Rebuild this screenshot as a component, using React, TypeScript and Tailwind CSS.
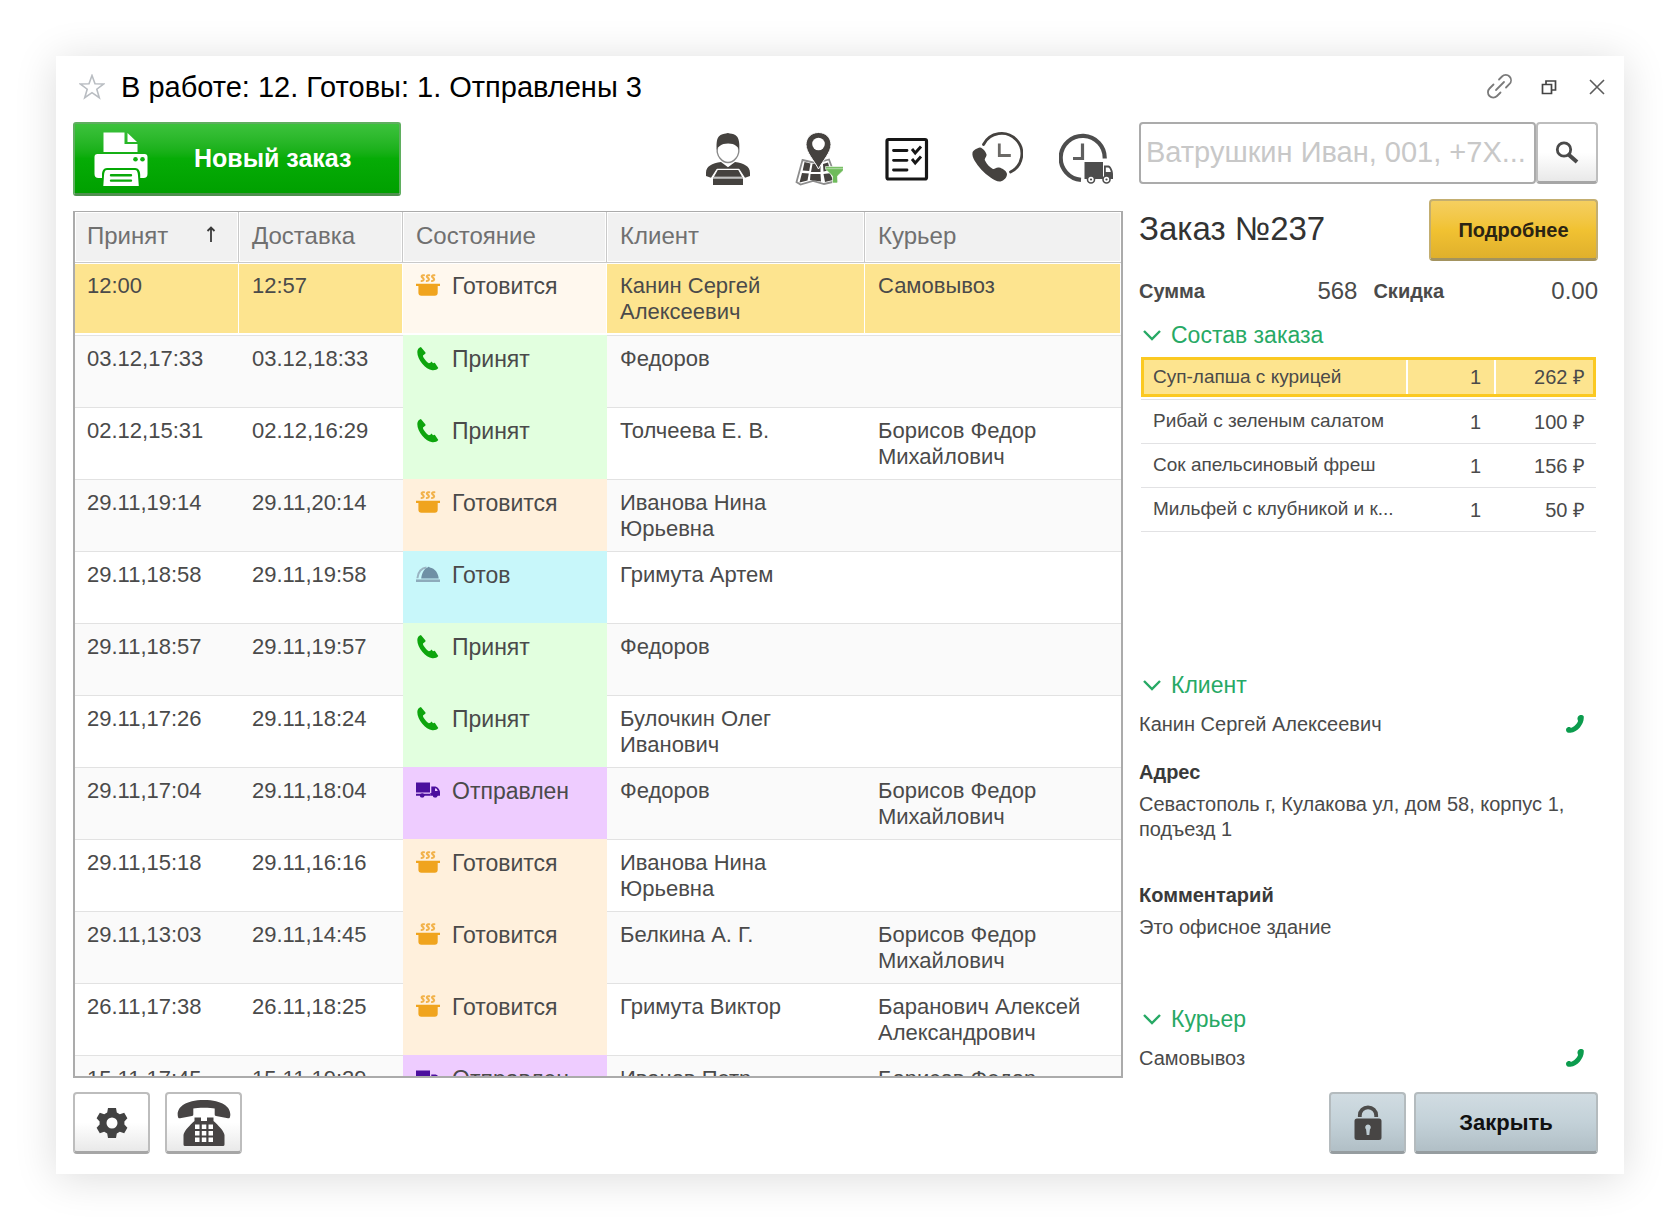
import type { ReactNode } from "react";

type Status = "cooking" | "accepted" | "ready" | "sent";

type Order = {
  accepted: string;
  delivery: string;
  status: Status;
  client: string;
  courier: string;
};

const orders: Order[] = [
  { accepted: "12:00", delivery: "12:57", status: "cooking", client: "Канин Сергей Алексеевич", courier: "Самовывоз" },
  { accepted: "03.12,17:33", delivery: "03.12,18:33", status: "accepted", client: "Федоров", courier: "" },
  { accepted: "02.12,15:31", delivery: "02.12,16:29", status: "accepted", client: "Толчеева Е. В.", courier: "Борисов Федор Михайлович" },
  { accepted: "29.11,19:14", delivery: "29.11,20:14", status: "cooking", client: "Иванова Нина Юрьевна", courier: "" },
  { accepted: "29.11,18:58", delivery: "29.11,19:58", status: "ready", client: "Гримута Артем", courier: "" },
  { accepted: "29.11,18:57", delivery: "29.11,19:57", status: "accepted", client: "Федоров", courier: "" },
  { accepted: "29.11,17:26", delivery: "29.11,18:24", status: "accepted", client: "Булочкин Олег Иванович", courier: "" },
  { accepted: "29.11,17:04", delivery: "29.11,18:04", status: "sent", client: "Федоров", courier: "Борисов Федор Михайлович" },
  { accepted: "29.11,15:18", delivery: "29.11,16:16", status: "cooking", client: "Иванова Нина Юрьевна", courier: "" },
  { accepted: "29.11,13:03", delivery: "29.11,14:45", status: "cooking", client: "Белкина А. Г.", courier: "Борисов Федор Михайлович" },
  { accepted: "26.11,17:38", delivery: "26.11,18:25", status: "cooking", client: "Гримута Виктор", courier: "Баранович Алексей Александрович" },
  { accepted: "15.11,17:45", delivery: "15.11,19:29", status: "sent", client: "Иванов Петр", courier: "Борисов Федор Михайлович" },
];

const dishes = [
  { name: "Суп-лапша с курицей", qty: 1, price: "262 ₽" },
  { name: "Рибай с зеленым салатом", qty: 1, price: "100 ₽" },
  { name: "Сок апельсиновый фреш", qty: 1, price: "156 ₽" },
  { name: "Мильфей с клубникой и к...", qty: 1, price: "50 ₽" },
];

const PotIcon = () => (
  <svg viewBox="0 0 24 24" className="size-6 shrink-0" fill="none" aria-hidden="true">
    <g stroke="#f2b24a" strokeWidth="2" strokeLinecap="round">
      <path d="M8 1.300C6 .700 4.800 2.300 6.500 3.600S8.400 6.700 5.600 7.100" />
      <path d="M13.200 1.300C11.200.700 10 2.300 11.700 3.600S13.600 6.700 10.800 7.100" />
      <path d="M18.400 1.300C16.400.700 15.200 2.300 16.900 3.600S18.800 6.700 16 7.100" />
    </g>
    <path d="M0 9.700h24v2.300h-2.300v6.700a3 3 0 0 1-3 3H5.400a3 3 0 0 1-3-3V12H0z" fill="#f0a41e" />
  </svg>
);

const ReceiverIcon = () => (
  <svg viewBox="0 0 24 24" className="size-6 shrink-0" aria-hidden="true">
    <path
      d="M4.900 0 9.300 5.200c.4.500.3 1.100-.1 1.500L7 8.500c-.5 1.200 2.800 5.800 5.900 7.800l1.500-.6 1.100-1.200 1.500 1.800 1.800-.6 3.500 5.400c-1.200 1.700-3.800 2.500-6 2.200C9.700 22.500 1.200 12.500 1.300 5 1.400 2.700 2.600.600 4.900 0z"
      fill="#0da50d"
    />
  </svg>
);

const ClocheIcon = () => (
  <svg viewBox="0 0 24 24" className="size-6 shrink-0" aria-hidden="true">
    <path d="M0 16.400h24v2.600H0z" fill="#8eabbb" />
    <path d="M1.400 15.200C1.800 8.500 6 4.900 10.500 4.500" stroke="#9ab4c2" strokeWidth="2" fill="none" />
    <path d="M5.200 15.600C6 9.500 8.600 5.600 11.600 4.600c.3-1.200 1.800-1.200 2.100 0 5.300.9 8.600 5.600 9 11z" fill="#6f90a5" />
  </svg>
);

const VanIcon = () => (
  <svg viewBox="0 0 24 24" className="size-6 shrink-0" fill="#4b0f9e" aria-hidden="true">
    <path d="M0 3.500h14v10H0z" />
    <path d="M0 14.800h14.300v2H8.500a2.500 2.500 0 0 1-4.600 0H0z" />
    <path d="M15.300 7.500h4.200c2.400.5 4 3.200 4.500 5.200v4.100h-2.300a2.800 2.800 0 0 1-5 0h-2.400v-2.700h1zM19 9.300v2.600h2.800l-1.200-2.200z" fillRule="evenodd" />
    <circle cx="6.200" cy="16.400" r="2.200" />
    <circle cx="19.200" cy="16.400" r="2.200" />
  </svg>
);

const statuses: Record<Status, { label: string; tone: string; icon: ReactNode }> = {
  cooking: { label: "Готовится", tone: "bg-[#fff0dc]", icon: <PotIcon /> },
  accepted: { label: "Принят", tone: "bg-[#e2ffdf]", icon: <ReceiverIcon /> },
  ready: { label: "Готов", tone: "bg-[#c8f7fa]", icon: <ClocheIcon /> },
  sent: { label: "Отправлен", tone: "bg-[#eeccff]", icon: <VanIcon /> },
};

const PrinterIcon = () => (
  <svg viewBox="0 0 54 54" className="size-[54px] shrink-0" aria-hidden="true">
    <path d="M9.500 0.500h21v11.500h13v8H9.500z" fill="#fff" />
    <path d="M33.500 1 43 10H33.500z" fill="#fff" />
    <path d="M3.500 22h47a3 3 0 0 1 3 3v17a4 4 0 0 1-4 4h-3.300v-3c0-4-1.700-7-5-7H13c-3.500 0-5 3-5 7v3H4.500a4 4 0 0 1-4-4V25a3 3 0 0 1 3-3z" fill="#fff" />
    <circle cx="41.500" cy="27.300" r="2.300" fill="#12b112" />
    <circle cx="48.500" cy="27.300" r="2.300" fill="#12b112" />
    <path d="M13 38h28c2 0 2.800 2 3 5.500l.8 10.500H9.300L10 43.500C10.200 40 11 38 13 38z" fill="#fff" />
    <path d="M17 43.200h20M17 48.600h20" stroke="#0aa90a" strokeWidth="2.400" strokeLinecap="round" />
  </svg>
);

const CourierIcon = () => (
  <svg viewBox="0 0 54 54" className="size-[54px]" aria-hidden="true">
    <path d="M18.500 16c-1.800 8 5 14.500 10.500 14.500S41.300 24 39.500 16" fill="#fff" stroke="#8a8a8a" strokeWidth="1.400" />
    <path d="M17.800 18c-.6-4-.4-11 2-13.500C22 2 25 2 27 1.500c.8-.8 3-.8 3.800 0 2.500.4 5.600.8 7.400 3.200 2.200 2.800 2.500 9.300 1.900 13.300-.8-3-4-6.500-11-6.500s-10.500 3.500-11.300 6.500z" fill="#45423f" />
    <path d="m22 30 7 5.200 7-5.200c9 1.500 15 4 15 11v3l-5 1.700-5.500-8.500h-23L12 45.700 7 44v-3c0-7 6-9.500 15-11z" fill="#45423f" />
    <path d="M18.500 37.300h21l4.500 8H14z" fill="#45423f" stroke="#fff" strokeWidth="1.200" />
    <path d="M14 46.500h30V53H14z" fill="#45423f" />
    <path d="M14 46h30" stroke="#a5a5a5" strokeWidth="1.400" />
  </svg>
);

const MapIcon = () => (
  <svg viewBox="0 0 54 54" className="size-[54px]" aria-hidden="true">
    <path d="m13.500 28 13 3 13.500-3.500 8 21.500-13 3-11-3-12.500 3.500-4-2.500z" fill="#fff" stroke="#8d8d8d" strokeWidth="1.800" />
    <path d="m15.500 30 6 1.500-1.300 7.500-6.500-.5zM23.500 32h8v8h-9.500zM34 32l5-1.500 2 7.500-6.500 1.500zM13 41l6.800.5-1.300 7-8 2zM21.500 42h10l.5 7.500-11-1.500zM34.500 42l6.500-.7 3 6.700-8 2z" fill="#45423f" />
    <path d="M29.500 0.500C37 .500 42 6 42 12.500c0 8-8.500 16.500-12.500 24.500C25.500 29 17 20.500 17 12.500 17 6 22 .500 29.500.500z" fill="#45423f" stroke="#fff" strokeWidth="1" />
    <circle cx="29.500" cy="12" r="6.300" fill="#fff" />
    <path d="M36.500 34.500h19v2.700L48.500 44v7h-5v-7l-7-6.800z" fill="#6fbb5b" stroke="#fff" strokeWidth=".6" />
    <path d="M37 36.500h18" stroke="#a7d69b" strokeWidth="1.400" />
  </svg>
);

const ChecklistIcon = () => (
  <svg viewBox="0 0 54 54" className="size-[54px]" fill="none" stroke="#161616" aria-hidden="true">
    <rect x="8" y="7.500" width="39.500" height="39.500" rx="1.500" strokeWidth="3.200" />
    <path d="M14.500 18.500H28M14.500 28.300H28M14.500 38H28" strokeWidth="2.800" strokeLinecap="round" />
    <path d="m33 17 3.200 4 5.800-6.500M33 27l3.200 4 5.800-6.500" strokeWidth="2.900" />
  </svg>
);

const CallTimeIcon = () => (
  <svg viewBox="0 0 54 54" className="size-[54px]" aria-hidden="true">
    <path d="M14.500 12.500A20.300 20.300 0 1 1 41.500 40" fill="none" stroke="#45423f" strokeWidth="2.800" strokeLinecap="round" />
    <path d="M30.300 11.500V23.500h11.500" fill="none" stroke="#6b6966" strokeWidth="2.800" />
    <path d="M3.500 20.500c1-2.500 4.500-4.500 7.500-5 3 .7 5.500 3.800 6.500 6.800.5 2.700-2.500 4.200-1.500 6.200 2 3.800 4.500 6.500 7.500 8.300 2.300 1 3.500-2 6.500-1.300 3.500.7 7.500 3.500 8 6.500 0 3.500-3 6.500-6.500 7.500-3 .5-7-2-10-4-7-4.800-12.500-11-16-17-1.500-2.700-2.500-5.500-2-8z" fill="#45423f" />
  </svg>
);

const DeliveryTimeIcon = () => (
  <svg viewBox="0 0 54 54" className="size-[54px]" aria-hidden="true">
    <path d="M22 47.800A22 22 0 1 1 45.700 26.500" fill="none" stroke="#4d4d4d" strokeWidth="4.200" />
    <path d="M23.500 11.500v15H14" fill="none" stroke="#5f5f5f" strokeWidth="3.200" />
    <path d="M25.500 30h18.500v17H25.500z" fill="#4d4d4d" />
    <path d="M45 33.500h4.500c2.500.5 4.500 5 4.500 8.500v5h-9zM46.800 35.500V40h5c-.5-2.500-1.500-4.500-3-4.500z" fill="#4d4d4d" fillRule="evenodd" />
    <circle cx="32" cy="47.500" r="3.500" fill="#fff" stroke="#4d4d4d" strokeWidth="1.600" />
    <circle cx="47.500" cy="47.500" r="3.500" fill="#fff" stroke="#4d4d4d" strokeWidth="1.600" />
    <circle cx="32" cy="47.500" r="1.100" fill="#4d4d4d" />
    <circle cx="47.500" cy="47.500" r="1.100" fill="#4d4d4d" />
  </svg>
);

const tools = [
  { label: "Курьеры", icon: <CourierIcon /> },
  { label: "Карта", icon: <MapIcon /> },
  { label: "Список", icon: <ChecklistIcon /> },
  { label: "Звонки", icon: <CallTimeIcon /> },
  { label: "Доставка", icon: <DeliveryTimeIcon /> },
];

const columns = ["Принят", "Доставка", "Состояние", "Клиент", "Курьер"];

const CallButton = ({ label }: { label: string }) => (
  <button aria-label={label} className="mr-[14px]">
    <svg viewBox="0 0 18 18" className="size-[18px]" aria-hidden="true">
      <path
        d="M13.300.4c1.200-.7 3.700-.5 4.400.9.9 6.700-5.300 15.400-13.300 16.500-1.900.3-3.700-.4-4.200-1.900-.4-1.400 0-2.900 1.200-3.400 1-.5 2.100-.5 3-.1.900.4 1.300.4 2-.1C8.700 11 10.900 8.700 11.900 6.400c.2-.7 0-1-.3-1.800-.5-1.500.3-3.500 1.700-4.200z"
        fill="#0c9c4e"
      />
    </svg>
  </button>
);

const SectionTitle = ({ children }: { children: ReactNode }) => (
  <h3>
    <button className="flex h-7 items-center gap-[10px] pl-1 text-[23px] leading-7 text-[#27a965]">
      <svg viewBox="0 0 18 12" className="h-3 w-[18px]" fill="none" stroke="currentColor" strokeWidth="2.400" aria-hidden="true">
        <path d="m1 2 8 8 8-8" />
      </svg>
      {children}
    </button>
  </h3>
);

const lightButton =
  "flex items-center justify-center rounded-[4px] border-2 border-b-[3px] border-[#bdbdbd] border-b-[#a6a6a6] bg-linear-to-b from-white from-50% to-[#e9e9e9]";
const blueButton =
  "flex items-center justify-center rounded-[4px] border-2 border-b-[3px] border-[#b4bbbe] border-b-[#969da0] bg-linear-to-b from-[#d1dce2] via-[#c3d1d8] to-[#b1bfc6]";

export default function App() {
  return (
    <div className="flex h-screen bg-white p-14 font-['Liberation_Sans',Arial,sans-serif] text-[#4a4a4a]">
      <main className="flex min-w-0 flex-1 flex-col bg-white pb-5 shadow-[0_4px_40px_rgba(0,0,0,0.14)]">
        <header className="mb-1 flex h-[62px] shrink-0 items-center pr-[19px] pl-[23px]">
          <button aria-label="Избранное">
            <svg viewBox="0 0 26 26" className="size-[26px]" fill="none" stroke="#b9bdc2" strokeWidth="1.600" aria-hidden="true">
              <path d="m13 1.500 3 8.200 8.800.2-7 5.300 2.500 8.500L13 18.700l-7.300 5 2.500-8.500-7-5.300 8.800-.2z" />
            </svg>
          </button>
          <h1 className="ml-4 flex-1 text-[29px] leading-9 text-black">В работе: 12. Готовы: 1. Отправлены 3</h1>
          <div className="flex items-center text-[#5c5c5c]">
            <button aria-label="Ссылка">
              <svg viewBox="0 0 26 26" className="size-[26px]" fill="none" stroke="#7a7a7a" strokeWidth="1.800" strokeLinecap="round" aria-hidden="true">
                <path d="m9 16 8-8" />
                <path d="m12 5.500 3-3a5.300 5.300 0 0 1 7.500 0c2 2 2 5.300 0 7.500l-3.500 3.500" />
                <path d="m6.500 10.500-4 4a5.300 5.300 0 0 0 0 7.500 5.300 5.300 0 0 0 7.500 0l3.500-3.500" />
              </svg>
            </button>
            <button aria-label="Свернуть в окно" className="ml-7">
              <svg viewBox="0 0 16 16" className="size-4" fill="none" stroke="#444" strokeWidth="1.700" aria-hidden="true">
                <path d="M1.500 5.500h9v9h-9zM5 5V2h9.500v9H11" />
              </svg>
            </button>
            <button aria-label="Закрыть окно" className="ml-8">
              <svg viewBox="0 0 16 16" className="size-4" fill="none" stroke="#5c5c5c" strokeWidth="1.600" aria-hidden="true">
                <path d="m1 1 14 14M15 1 1 15" />
              </svg>
            </button>
          </div>
        </header>

        <div className="grid min-h-0 flex-1 grid-cols-[1050fr_459fr] gap-4 pr-[26px] pl-[17px]">
          <section className="flex min-h-0 flex-col">
            <div className="flex h-[74px] shrink-0 items-center justify-between">
              <button className="flex h-full w-[328px] items-center rounded-[3px] border-2 border-b-[3px] border-[#5fae5f] border-b-[#4f8f4f] bg-linear-to-b from-[#3cc23c] via-[#06ac06] to-[#00a000] pl-[19px] text-[25px] font-bold text-white">
                <PrinterIcon />
                <span className="ml-[46px]">Новый заказ</span>
              </button>
              <div className="flex gap-9 pr-[10px]">
                {tools.map((t) => (
                  <button key={t.label} aria-label={t.label}>
                    {t.icon}
                  </button>
                ))}
              </div>
            </div>

            <div className="mt-[15px] min-h-0 flex-1 overflow-hidden border-2 border-t border-[#ababab]">
              <table className="w-full table-fixed border-separate border-spacing-0">
                <colgroup>
                  <col className="w-[164px]" />
                  <col className="w-[164px]" />
                  <col className="w-[204px]" />
                  <col className="w-[258px]" />
                  <col />
                </colgroup>
                <thead>
                  <tr className="h-[51px]">
                    {columns.map((c, i) => (
                      <th
                        key={c}
                        scope="col"
                        className="border-r border-b border-[#c9c9c9] bg-[#f1f1f1] pr-3 pb-[2px] pl-[13px] text-left text-[24px] leading-7 font-normal text-[#707070] shadow-[inset_0_0_0_1px_#fff] first:pl-3 last:border-r-0"
                      >
                        <span className="flex items-center justify-between">
                          {c}
                          {i === 0 && (
                            <svg viewBox="0 0 10 16" className="mr-[10px] mb-1 h-4 w-[10px]" fill="none" stroke="#3a3a3a" strokeWidth="1.800" aria-hidden="true">
                              <path d="M5 16V1.500M1.500 5l3.500-3.500L8.500 5" />
                            </svg>
                          )}
                        </span>
                      </th>
                    ))}
                  </tr>
                </thead>
                <tbody className="text-[22px] leading-[26px]">
                  {orders.map((o, i) => {
                    const s = statuses[o.status];
                    const selected = i === 0;
                    const cell = selected
                      ? "border-t border-r border-b-2 border-white bg-[#fde48f] bg-clip-padding pt-[9px] pr-3 pl-[13px] align-top first:pl-3"
                      : i % 2
                        ? "border-t border-[#e2e2e2] bg-[#fafafa] pt-[10px] pr-3 pl-[13px] align-top first:pl-3"
                        : "border-t border-[#e2e2e2] bg-white pt-[10px] pr-3 pl-[13px] align-top first:pl-3";
                    return (
                      <tr key={i} className="h-[72px]">
                        <td className={cell}>{o.accepted}</td>
                        <td className={cell}>{o.delivery}</td>
                        <td
                          className={
                            selected
                              ? "border-t border-r border-b-2 border-white bg-[#fff8ee] bg-clip-padding pt-[9px] pr-3 pl-[13px] align-top"
                              : `pt-[11px] pr-3 pl-[13px] align-top ${s.tone}`
                          }
                        >
                          <span className="flex items-center gap-3 text-[23px]">
                            {s.icon}
                            {s.label}
                          </span>
                        </td>
                        <td className={cell}>
                          <span className="block max-w-[180px]">{o.client}</span>
                        </td>
                        <td className={cell}>{o.courier}</td>
                      </tr>
                    );
                  })}
                </tbody>
              </table>
            </div>
          </section>

          <aside className="min-w-0 text-[20px]">
            <form className="flex h-[62px]" onSubmit={(e) => e.preventDefault()}>
              <input
                type="text"
                aria-label="Поиск заказа"
                placeholder="Ватрушкин Иван, 001, +7X..."
                className="min-w-0 flex-1 rounded-[4px] border-2 border-[#ababab] px-[5px] text-[29px] text-[#4a4a4a] outline-none placeholder:text-[#c8c8c8]"
              />
              <button aria-label="Найти" className={`w-[62px] ${lightButton}`}>
                <svg viewBox="0 0 24 24" className="size-6" fill="none" stroke="#4a4a4a" aria-hidden="true">
                  <circle cx="9" cy="8.500" r="6.700" strokeWidth="2.800" />
                  <path d="m13.500 13.500 8.500 7.500" strokeWidth="4" />
                </svg>
              </button>
            </form>

            <div className="mt-[15px] flex h-[62px] items-start justify-between">
              <h2 className="pt-3 text-[33px] leading-9 text-[#333]">Заказ №237</h2>
              <button className="h-full w-[169px] rounded-[4px] border-2 border-b-[3px] border-[#c3ae70] border-b-[#a3935f] bg-linear-to-b from-[#f5cf5f] via-[#f1c232] to-[#e0b02c] text-[20px] font-bold text-[#2b2413]">
                Подробнее
              </button>
            </div>

            <dl className="mt-[14px] flex h-8 items-center">
              <dt className="font-bold">Сумма</dt>
              <dd className="flex-1 text-right text-[24px]">568</dd>
              <dt className="ml-4 font-bold">Скидка</dt>
              <dd className="w-[154px] text-right text-[24px]">0.00</dd>
            </dl>

            <div className="mt-[14px] min-h-[350px]">
              <SectionTitle>Состав заказа</SectionTitle>
              <div className="mt-2 px-[2px]">
                <table className="w-full table-fixed border-separate border-spacing-0 text-[19px]">
                  <colgroup>
                    <col />
                    <col className="w-[90px]" />
                    <col className="w-[100px]" />
                  </colgroup>
                  <tbody>
                    {dishes.map((d, i) =>
                      i === 0 ? (
                        <tr key={d.name}>
                          <td className="border-b border-[#e2e2e4] pb-[2px]">
                            <div className="flex h-10 items-center truncate border-y-3 border-l-3 border-[#fbc922] bg-[#fde48f] pl-[9px]">{d.name}</div>
                          </td>
                          <td className="border-b border-[#e2e2e4] pb-[2px]">
                            <div className="h-10 border-y-3 border-[#fbc922] bg-[#fde48f] text-[20px]">
                              <div className="flex h-full items-center justify-end border-x-2 border-white pr-[13px]">{d.qty}</div>
                            </div>
                          </td>
                          <td className="border-b border-[#e2e2e4] pb-[2px]">
                            <div className="flex h-10 items-center justify-end border-y-3 border-r-3 border-[#fbc922] bg-[#fde48f] pr-2 text-[20px]">{d.price}</div>
                          </td>
                        </tr>
                      ) : (
                        <tr key={d.name} className="h-[44px]">
                          <td className="truncate border-b border-[#e2e2e4] pl-3">{d.name}</td>
                          <td className="border-b border-[#e2e2e4] pr-[15px] text-right text-[20px]">{d.qty}</td>
                          <td className="border-b border-[#e2e2e4] pr-[11px] text-right text-[20px]">{d.price}</td>
                        </tr>
                      ),
                    )}
                  </tbody>
                </table>
              </div>
            </div>

            <SectionTitle>Клиент</SectionTitle>
            <div className="mt-3 flex items-center justify-between leading-[26px]">
              <p>Канин Сергей Алексеевич</p>
              <CallButton label="Позвонить клиенту" />
            </div>
            <h4 className="mt-[22px] leading-[26px] font-bold text-[#3a3a3a]">Адрес</h4>
            <p className="mt-[7px] min-h-[90px] leading-[25px]">Севастополь г, Кулакова ул, дом 58, корпус 1, подъезд 1</p>
            <h4 className="leading-[26px] font-bold text-[#3a3a3a]">Комментарий</h4>
            <p className="mt-[7px] min-h-[90px] leading-[25px]">Это офисное здание</p>
            <SectionTitle>Курьер</SectionTitle>
            <div className="mt-3 flex items-center justify-between leading-[26px]">
              <p>Самовывоз</p>
              <CallButton label="Позвонить курьеру" />
            </div>
          </aside>
        </div>

        <footer className="mt-[14px] flex h-[62px] shrink-0 pr-[26px] pl-[17px]">
          <button aria-label="Настройки" className={`w-[77px] ${lightButton}`}>
            <svg viewBox="0 0 32 32" className="size-8" fill="#424242" aria-hidden="true">
              <path
                fillRule="evenodd"
                d="M12 1h8l.8 4.600 3 1.600 4.400-1.500 3.200 5.600-3 3.200v3l3 3.200-3.200 5.600-4.400-1.500-3 1.600L20 31h-8l-.8-4.600-3-1.600-4.400 1.500-3.200-5.600 3-3.200v-3l-3-3.200 3.200-5.600 4.400 1.500 3-1.600zM16 10.500a5.500 5.500 0 1 0 0 11 5.500 5.500 0 0 0 0-11z"
              />
            </svg>
          </button>
          <button aria-label="Телефон" className={`ml-[15px] w-[77px] ${lightButton}`}>
            <svg viewBox="0 0 54 46" className="h-[46px] w-[54px]" fill="#474444" aria-hidden="true">
              <path d="M1 17C-1 9 6 0 27 0s28 9 26 17c-.2 1.200-1 1.500-2 1.300L39 16c-1-.2-1.300-.8-1.300-1.800V8.500C34 7.500 20 7.500 16.300 8.500v5.700c0 1-.3 1.600-1.300 1.800L3 18.300C2 18.500 1.200 18.200 1 17z" />
              <path d="M17.500 17.500h6.500V21h6v-3.500h6.500V21C41 25 47 31 47.500 35v9.500a1.500 1.500 0 0 1-1.500 1.500H8a1.500 1.500 0 0 1-1.500-1.500V35C7 31 13 25 17.500 21z" />
              <g fill="#fff">
                <path d="M18 24.500h4.500V29H18zM24.800 24.500h4.500V29h-4.500zM31.500 24.500H36V29h-4.500zM18 31h4.500v4.500H18zM24.800 31h4.500v4.500h-4.500zM31.500 31H36v4.500h-4.500zM18 37.500h4.500V42H18zM24.800 37.500h4.500V42h-4.500zM31.500 37.500H36V42h-4.500z" />
              </g>
            </svg>
          </button>
          <button aria-label="Заблокировать" className={`ml-auto w-[77px] ${blueButton}`}>
            <svg viewBox="0 0 28 36" className="h-9 w-7" fill="#474544" aria-hidden="true">
              <path d="M5.800 12V10.500a8.200 8.200 0 0 1 16.400 0V12" fill="none" stroke="#4d4c4b" strokeWidth="3.800" />
              <path
                fillRule="evenodd"
                d="M3 13.500h22a2.500 2.500 0 0 1 2.500 2.500v16.500A2.500 2.500 0 0 1 25 35H3a2.500 2.500 0 0 1-2.500-2.500V16A2.500 2.500 0 0 1 3 13.500zM14 19.500a2.900 2.900 0 0 0-1.900 5l.6 5.500h2.600l.6-5.500a2.900 2.900 0 0 0-1.900-5z"
              />
            </svg>
          </button>
          <button className={`ml-2 w-[184px] text-[22px] font-bold text-[#111] ${blueButton}`}>Закрыть</button>
        </footer>
      </main>
    </div>
  );
}
